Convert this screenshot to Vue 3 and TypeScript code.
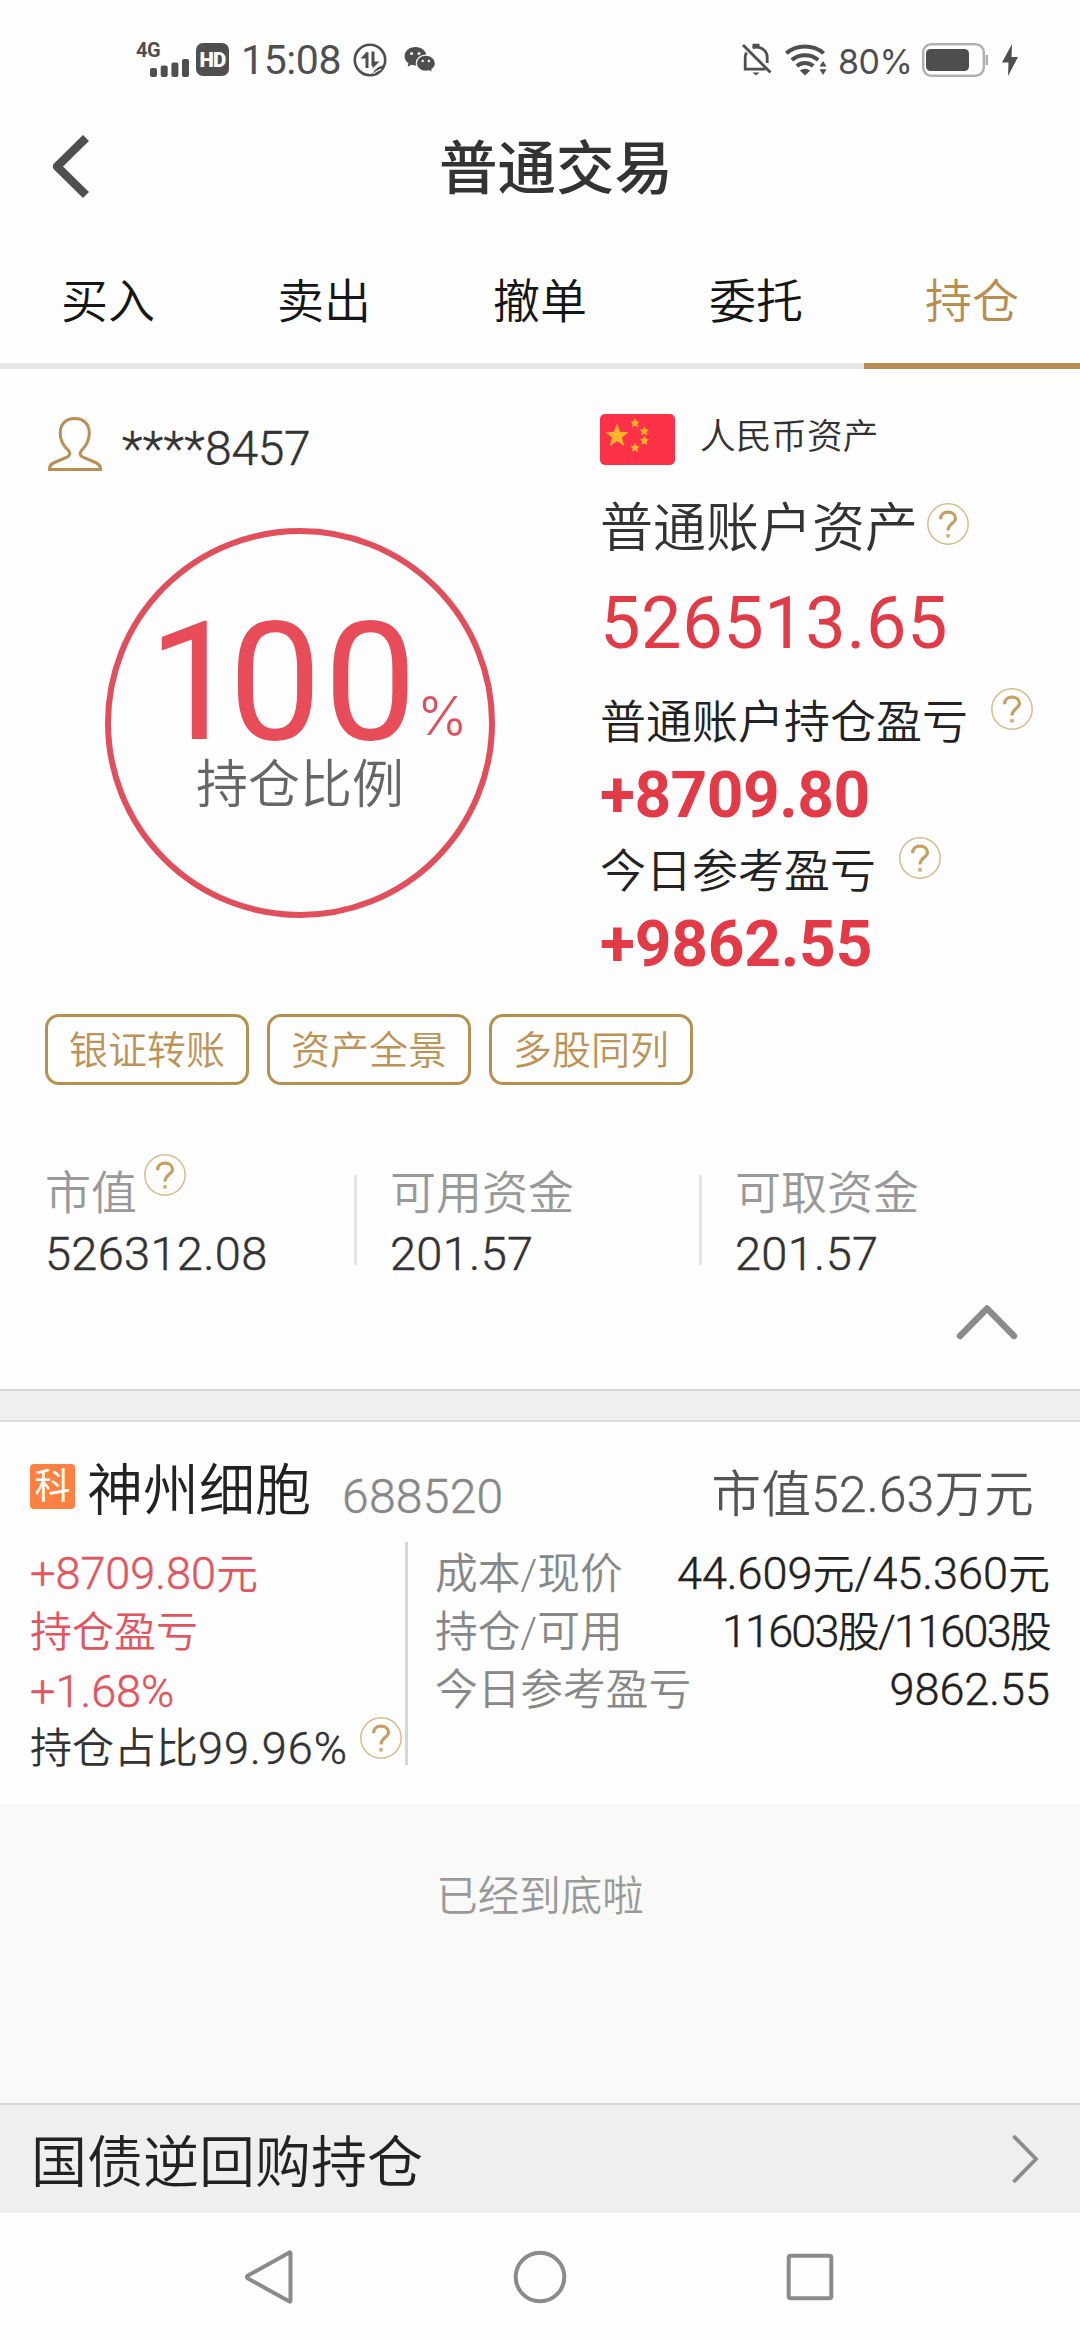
<script setup lang="ts">
import { defineComponent, h } from 'vue'

const HelpIcon = defineComponent({
  setup() {
    return () =>
      h('svg', { width: 42, height: 42, viewBox: '0 0 42 42', fill: 'none', style: { flex: 'none' } }, [
        h('circle', { cx: 21, cy: 21, r: 20.2, stroke: '#d8bb8c', 'stroke-width': 1.5 }),
        h('path', {
          d: 'M13.6 16.2C13.6 11.8 16.8 9.2 21 9.2C25.3 9.2 28.5 11.8 28.5 15.4C28.5 20.2 21 20.8 21 27.6',
          stroke: '#c69f62',
          'stroke-width': 3.2,
        }),
        h('circle', { cx: 21, cy: 32.8, r: 2.1, fill: '#d3b27c' }),
      ])
  },
})

const tabs: string[] = ['买入', '卖出', '撤单', '委托', '持仓']
const activeTab = '持仓'
const actions: string[] = ['银证转账', '资产全景', '多股同列']

interface Stat { label: string; value: string; help?: boolean; tight?: boolean }
const stats: Stat[] = [
  { label: '市值', value: '526312.08', help: true },
  { label: '可用资金', value: '201.57' },
  { label: '可取资金', value: '201.57' },
]

const details: Stat[] = [
  { label: '成本/现价', value: '44.609元/45.360元' },
  { label: '持仓/可用', value: '11603股/11603股', tight: true },
  { label: '今日参考盈亏', value: '9862.55' },
]

// Latin runs are set a little larger than the Chinese units beside them
const runs = (text: string): string[] => text.match(/[\u4e00-\u9fff]+|[^\u4e00-\u9fff]+/g) ?? []
const isLatin = (run: string): boolean => !/[\u4e00-\u9fff]/.test(run)
</script>

<template>
  <div class="screen">
    <header class="status">
      <div class="signal">
        <span class="net">4G</span>
        <svg class="bars" width="40" height="18" viewBox="0 0 40 18" fill="#4f4f4f">
          <rect x="0" y="9" width="7" height="9" rx="2" />
          <rect x="10.7" y="6.5" width="7" height="11.5" rx="2" />
          <rect x="21.4" y="3.5" width="7" height="14.5" rx="2" />
          <rect x="32" y="0" width="7" height="18" rx="2" />
        </svg>
      </div>
      <span class="hd">HD</span>
      <span class="time">15:08</span>
      <svg class="flow" width="34" height="34" viewBox="0 0 34 34" fill="none" stroke="#4f4f4f">
        <circle cx="17" cy="17" r="15.2" stroke-width="2.6" />
        <path d="M14 25V9.5M20 8.5V23" stroke-width="3" />
        <path d="M14.5 8L7.5 15.5H13Z M19.5 25.5L26.5 18.5H20Z" fill="#4f4f4f" stroke="none" />
        <path d="M19 32C21 26 26 23 32 22C31 27 26 31 19 32Z" fill="#4f4f4f" stroke="none" />
        <path d="M20.5 31C22 28 25 28.5 28 26" stroke="#fefefe" stroke-width="1.2" />
      </svg>
      <svg class="wechat" width="32" height="27" viewBox="0 0 32 27">
        <path d="M11.5 1C5.2 1 .6 5 .6 10.2c0 3 1.5 5.4 3.9 7L3.6 20.8l4-2c1.2.4 2.5.6 3.9.6 6.2 0 10.9-4 10.9-9.2S17.7 1 11.5 1Z" fill="#4f4f4f" />
        <path d="M21.8 9.2c-5.4 0-9.500 3.600-9.500 8.100s4.100 8 9.500 8c1.200 0 2.300-.2 3.300-.5l3.500 1.900-.8-3.100c2.200-1.500 3.600-3.700 3.600-6.300 0-4.500-4.200-8.100-9.600-8.100Z" fill="#4f4f4f" stroke="#fefefe" stroke-width="1.2" />
        <g fill="#fefefe">
          <circle cx="7.6" cy="7.6" r="1.5" /><circle cx="15" cy="7.6" r="1.5" />
          <circle cx="18.7" cy="15" r="1.2" /><circle cx="24.9" cy="15" r="1.2" />
        </g>
      </svg>
      <svg class="bell" width="30" height="33" viewBox="0 0 30 33" fill="none" stroke="#4f4f4f" stroke-width="2.8">
        <path d="M4.5 9.5C3.5 11.5 3.2 13 3.2 15V26.200H23.500" />
        <path d="M10.5 4.8C18 2.2 25.2 7 25.2 14.500V20" />
        <path d="M1 2L28.500 29.500" />
        <path d="M10.500 2.500H17.500" stroke-width="3.500" />
        <path d="M10.500 29.500H17.500L14 32.500Z" fill="#4f4f4f" stroke="none" />
      </svg>
      <svg class="wifi" width="42" height="32" viewBox="0 0 42 32" fill="none" stroke="#4f4f4f" stroke-width="4">
        <path d="M1.3 9.2C12 .2 28 .2 38.7 9.2" />
        <path d="M6.8 16C14 9.6 26 9.6 33.2 16" />
        <path d="M11.8 22C16.500 18 23.500 18 28.200 22" />
        <path d="M14.800 26.500Q20 23.200 25.200 26.500L20 31.500Z" fill="#4f4f4f" stroke="none" />
        <path d="M34.500 22.500L38 17L41.500 22.500Z M34.500 25.200H41.500L38 31Z" fill="#4f4f4f" stroke="none" />
      </svg>
      <span class="percent">80%</span>
      <svg class="battery" width="67" height="34" viewBox="0 0 67 34" fill="none">
        <rect x="1.2" y="1.2" width="60.6" height="31.6" rx="8" stroke="#b0b0b0" stroke-width="2.4" />
        <rect x="4" y="6" width="43" height="22" rx="4.5" fill="#4f4f4f" />
        <path d="M64.8 12V22" stroke="#b0b0b0" stroke-width="2.6" />
      </svg>
      <svg class="bolt" width="16" height="32" viewBox="0 0 16 32"><path d="M10 0L0 18.500H6.500L6 32L16 13H9.500Z" fill="#4f4f4f" /></svg>
    </header>

    <nav class="titlebar">
      <svg width="40" height="64" viewBox="0 0 40 64" fill="none"><path d="M36 3L7 31.5L36 60" stroke="#4f4f4f" stroke-width="8.5" stroke-linejoin="round" /></svg>
      <h1>普通交易</h1>
    </nav>

    <div class="tabs">
      <div v-for="t in tabs" :key="t" class="tab" :class="{ active: t === activeTab }">{{ t }}</div>
    </div>

    <section class="summary">
      <div class="overview">
        <div class="left">
          <div class="user">
            <svg width="54" height="54" viewBox="0 0 54 54" fill="none" stroke="#b98f54" stroke-width="3">
              <path d="M26.8 1.5C18 1.5 12.2 7 12.2 16C12.2 24.5 16 29.5 20.5 33.5C22.8 36 22 38.5 19 40.2L6.5 45.5C2.5 47 1.5 49 1.5 52.5H52.5C52.5 49 51 47 47.5 45.5L35 40.2C31.5 38.5 31.5 36 33.5 33.5C38 29 41.3 24.5 41.3 16C41.3 7 35.5 1.5 26.8 1.5Z" />
            </svg>
            <span class="account"><span class="stars">****</span>8457</span>
          </div>
          <div class="ring">
            <div class="ratio"><span class="big"><span class="lead">1</span>00</span><span class="unit">%</span></div>
            <div class="ratio-label">持仓比例</div>
          </div>
        </div>
        <div class="right">
          <div class="currency">
            <svg width="75" height="51" viewBox="0 0 75 51">
              <rect width="75" height="51" rx="5" fill="#fd3148" />
              <g fill="#fdb32a">
                <path d="M17 9.5L20.2 17.8L28.5 18.2L22 23.5L24.3 32L17 27.2L9.7 32L12 23.5L5.5 18.2L13.8 17.8Z" />
                <path id="s" d="M35 5L36.3 7.6L39 8L37 10L37.6 12.8L35 11.4L32.4 12.8L33 10L31 8L33.7 7.6Z" stroke="#fdb32a" stroke-width=".6" />
                <use href="#s" x="9.3" y="8" />
                <use href="#s" x="9.3" y="17.5" />
                <use href="#s" x="0" y="24.5" />
              </g>
            </svg>
            <span>人民币资产</span>
          </div>
          <div class="asset-title">普通账户资产<HelpIcon class="h1" /></div>
          <div class="asset">526513.65</div>
          <div class="pl-title">普通账户持仓盈亏<HelpIcon class="h2" /></div>
          <div class="pl">+8709.80</div>
          <div class="pl-title today">今日参考盈亏<HelpIcon class="h2" /></div>
          <div class="pl last">+9862.55</div>
        </div>
      </div>

      <div class="actions">
        <button v-for="a in actions" :key="a">{{ a }}</button>
      </div>

      <div class="stats">
        <div v-for="s in stats" :key="s.label" class="stat">
          <div class="stat-label">{{ s.label }}<HelpIcon v-if="s.help" class="h3" /></div>
          <div class="stat-value">{{ s.value }}</div>
        </div>
      </div>

      <div class="collapse">
        <svg width="62" height="36" viewBox="0 0 62 36" fill="none"><path d="M4 32L31 4.5L58 32" stroke="#8b8b8b" stroke-width="6.5" stroke-linecap="round" stroke-linejoin="round" /></svg>
      </div>
    </section>

    <div class="band"></div>

    <section class="stock">
      <div class="stock-head">
        <span class="badge">科</span>
        <span class="name">神州细胞</span>
        <span class="code">688520</span>
        <span class="mv">市值<span class="digits">52.63</span>万元</span>
      </div>
      <div class="stock-body">
        <div class="profit">
          <div class="p1"><span class="num">+8709.80</span>元</div>
          <div class="p2">持仓盈亏</div>
          <div class="p2"><span class="num">+1.68%</span></div>
          <div class="share">持仓占比<span class="num wide">99.96%</span><HelpIcon class="h4" /></div>
        </div>
        <div class="details">
          <div v-for="d in details" :key="d.label" class="detail">
            <span class="dl">{{ d.label }}</span>
            <span class="dv" :class="{ tight: d.tight }"><span v-for="(r, i) in runs(d.value)" :key="i" :class="{ num: isLatin(r) }">{{ r }}</span></span>
          </div>
        </div>
      </div>
    </section>

    <div class="end">已经到底啦</div>

    <div class="repo">
      <span>国债逆回购持仓</span>
      <svg width="28" height="50" viewBox="0 0 28 50" fill="none"><path d="M2.5 2L25 25L2.5 48" stroke="#8c8c8c" stroke-width="3.8" /></svg>
    </div>

    <footer class="sysnav">
      <svg width="54" height="54" viewBox="0 0 54 54"><path d="M47.5 3.5V50.5Q47.5 52.5 45.5 51L5 28.5Q2.8 27 5 25.5L45.5 3Q47.5 1.5 47.5 3.5Z" /></svg>
      <svg width="54" height="54" viewBox="0 0 54 54"><circle cx="27" cy="27" r="24.3" /></svg>
      <svg width="54" height="54" viewBox="0 0 54 54"><rect x="5.7" y="5.7" width="42.6" height="42.6" rx="2" /></svg>
    </footer>
  </div>
</template>

<style>
body { margin: 0; background: #fefefe; }
</style>

<style scoped>
.screen {
  width: 1080px;
  height: 2340px;
  overflow: hidden;
  display: flex;
  flex-direction: column;
  background: #fefefe;
  color: #222;
  font-family: Roboto, "Noto Sans CJK SC", sans-serif;
  font-weight: 350;
  white-space: nowrap;
}
.screen > * { flex: none; box-sizing: border-box; }
svg { display: block; flex: none; }

.status { height: 113px; padding: 6px 62px 0 136px; display: flex; align-items: center; color: #4f4f4f; font-weight: 400; }
.signal { width: 54px; height: 34px; display: flex; flex-direction: column; }
.net { font-size: 20px; line-height: 14px; height: 16px; font-weight: 700; letter-spacing: -0.5px; }
.bars { margin-left: 14px; }
.hd { width: 33px; height: 33px; margin-left: 6px; border-radius: 7px; background: #4f4f4f; color: #fefefe; font-size: 20.5px; font-weight: 900; line-height: 34px; text-align: center; letter-spacing: -0.8px; }
.time { width: 100px; margin-left: 12px; font-size: 41px; line-height: 50px; letter-spacing: -0.4px; }
.flow { margin-left: 12px; }
.wechat { margin-left: 17px; }
.bell { margin-left: auto; }
.wifi { margin-left: 13px; }
.percent { margin: 4px 0 0 11px; width: 73px; font-family: Inter, sans-serif; font-size: 34px; line-height: 40px; letter-spacing: -0.5px; }
.battery { margin-left: 11px; }
.bolt { margin-left: 13px; }

.titlebar { height: 108px; padding: 0 50px; display: flex; align-items: center; }
.titlebar h1 { flex: 1; margin: 3px 0 0 0; padding-right: 8px; text-align: center; font-size: 58.5px; line-height: 80px; font-weight: 500; color: #333; }

.tabs { height: 148px; display: flex; }
.tab { flex: 1; box-sizing: border-box; padding-top: 19px; border-bottom: 6px solid #e5e5ea; text-align: center; font-size: 47px; line-height: 123px; color: #161616; }
.tab.active { color: #b98e52; border-color: #b98e52; }

.summary { height: 1020px; display: flex; flex-direction: column; }
.overview { height: 610px; display: grid; grid-template-columns: 600px 480px; }
.user { height: 54px; padding: 48px 0 0 48px; display: flex; align-items: center; }
.account { margin: 10px 0 0 20px; font-size: 48px; line-height: 54px; letter-spacing: -0.3px; color: #333; }
.stars { letter-spacing: 0.4px; }
.ring { box-sizing: border-box; width: 390px; height: 390px; margin: 57px 0 0 105px; padding: 89px 0 0 37px; border: 6px solid #e04f5b; border-radius: 50%; }
.ratio { height: 120px; display: flex; align-items: flex-end; }
.big { width: 269px; font-size: 165px; line-height: 120px; letter-spacing: 2.5px; color: #e74c58; font-weight: 400; }
.lead { letter-spacing: -12px; }
.unit { font-family: Inter, sans-serif; font-weight: 300; font-size: 54px; line-height: 54px; color: #e04f5b; }
.ratio-label { margin: 1px 0 0 48px; font-size: 52px; line-height: 83px; color: #666; }

.currency { margin-top: 45px; height: 51px; display: flex; align-items: center; color: #333; font-size: 35.7px; line-height: 47px; }
.currency span { margin: 0 0 4px 25px; }
.asset-title { margin-top: 32px; height: 64px; line-height: 64px; font-size: 53px; color: #333; display: flex; align-items: center; }
.h1 { margin: 0 0 10px 9px; }
.asset { height: 125px; line-height: 125px; font-size: 72px; letter-spacing: 0.6px; color: #e23b48; font-weight: 400; }
.pl-title { height: 73px; line-height: 73px; font-size: 46px; color: #222; display: flex; align-items: center; }
.pl-title.today { height: 78px; line-height: 78px; }
.h2 { margin: 0 0 27px 23px; }
.pl { height: 73px; line-height: 73px; font-size: 64px; letter-spacing: -0.5px; font-weight: 700; color: #e33a48; }
.pl.last { height: 69px; line-height: 69px; letter-spacing: -0.2px; }

.actions { margin: 35px 0 0 45px; display: flex; gap: 18px; }
.actions button { box-sizing: border-box; width: 204px; height: 71px; padding: 2px 0 0; border: 3px solid #b5904f; border-radius: 14px; background: none; color: #bd9358; font: 350 39px/65px Roboto, "Noto Sans CJK SC", sans-serif; }

.stats { margin: 78px 0 0 45px; height: 121px; display: flex; }
.stat { width: 345px; position: relative; }
.stat + .stat::before { content: ""; position: absolute; left: -36px; top: 12px; width: 3px; height: 90px; background: #e3e3e3; }
.stat-label { height: 61px; line-height: 61px; font-size: 46px; color: #999; display: flex; align-items: center; }
.h3 { margin: 0 0 37px 7px; }
.stat-value { line-height: 60px; font-size: 47px; letter-spacing: 0.3px; color: #333; }
.collapse { margin-top: 20px; padding-right: 62px; display: flex; justify-content: flex-end; }

.band { height: 33px; background: #efefef; border-top: 2px solid #d8d8d8; border-bottom: 2px solid #dcdcdc; }

.stock { height: 382px; }
.stock-head { height: 120px; padding: 18px 46px 0 30px; box-sizing: border-box; display: flex; align-items: center; }
.badge { width: 45px; height: 45px; margin-bottom: 9px; border-radius: 4px; background: #ff8040; color: #fff; font-size: 36px; line-height: 46px; font-weight: 400; text-align: center; }
.name { margin-left: 12px; font-size: 56px; line-height: 60px; color: #222; }
.code { margin: 11px 0 0 31px; font-size: 48px; line-height: 54px; letter-spacing: 0.3px; color: #888; }
.mv { margin: 7px 0 0 auto; font-size: 49.5px; line-height: 54px; letter-spacing: 0.3px; color: #555; }
.stock-body { display: flex; height: 223px; }
.num { font-size: 45px; }
.num.wide { letter-spacing: 1px; }
.account, .stat-value, .code, .digits, .num { -webkit-text-stroke: 0.45px currentColor; }
.profit { box-sizing: border-box; width: 408px; padding: 3px 0 0 30px; border-right: 3px solid #d6d6d6; font-size: 42px; color: #e25560; }
.p1 { height: 58px; line-height: 58px; }
.p2 { height: 59px; line-height: 59px; }
.share { height: 55px; line-height: 55px; color: #333; display: flex; align-items: center; }
.h4 { margin: 0 0 21px 12px; }
.details { flex: 1; padding: 3px 30px 0 27px; }
.detail { display: flex; justify-content: space-between; height: 58.2px; font-size: 42px; line-height: 58.2px; }
.dl { color: #888; font-size: 42.7px; }
.dv { color: #222; }
.dv.tight { letter-spacing: -1.8px; }

.end { height: 299px; background: #f9f9f8; text-align: center; padding-top: 63px; font-size: 41.5px; line-height: 60px; color: #999; }
.repo { height: 110px; padding: 0 41px 0 31px; border-top: 2px solid #d6d6d6; background: #efefef; display: flex; align-items: center; justify-content: space-between; font-size: 56px; line-height: 80px; color: #222; }
.repo span { padding-top: 7px; }
.sysnav { height: 127px; padding: 0 243px; display: flex; align-items: center; justify-content: space-between; }
.sysnav svg { fill: none; stroke: #8b8b8b; stroke-width: 4; stroke-linejoin: round; }
</style>
